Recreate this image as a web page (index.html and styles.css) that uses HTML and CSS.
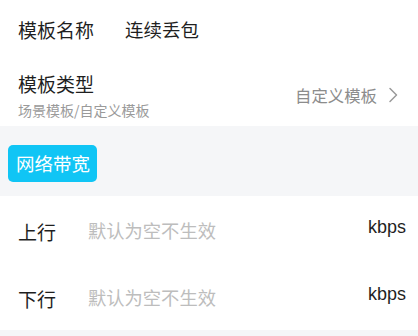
FILE: index.html
```html
<!DOCTYPE html>
<html lang="zh-CN">
<head>
<meta charset="utf-8">
<link rel="stylesheet" href="styles.css">
</head>
<body>
<div class="page">
  <section class="card">
    <div class="row row-name">
      <span class="label">模板名称</span>
      <span class="name-value">连续丢包</span>
    </div>
    <div class="row row-type">
      <div class="type-text">
        <div class="label">模板类型</div>
        <div class="sub">场景模板/自定义模板</div>
      </div>
      <div class="type-value">
        <span>自定义模板</span>
        <svg class="chev" width="10" height="16" viewBox="0 0 10 16"><path d="M2 1.5 L8.5 8 L2 14.5" fill="none" stroke="#9a9a9a" stroke-width="1.5" stroke-linecap="round" stroke-linejoin="round"/></svg>
      </div>
    </div>
  </section>
  <div class="band">
    <span class="badge">网络带宽</span>
  </div>
  <section class="card">
    <div class="row bw-row">
      <span class="bw-label">上行</span>
      <span class="placeholder">默认为空不生效</span>
      <span class="unit">kbps</span>
    </div>
    <div class="row bw-row">
      <span class="bw-label">下行</span>
      <span class="placeholder">默认为空不生效</span>
      <span class="unit">kbps</span>
    </div>
  </section>
</div>
</body>
</html>
```
FILE: styles.css
```css
html, body {
  margin: 0;
  padding: 0;
  background: #f5f6f8;
}
body {
  font-family: "Noto Sans CJK SC", "Noto Sans", sans-serif;
  color: #1f1f1f;
  width: 418px;
  height: 336px;
  overflow: hidden;
}
.page {
  display: flex;
  flex-direction: column;
}
.card {
  background: #ffffff;
  display: flex;
  flex-direction: column;
}
.row {
  display: flex;
  align-items: center;
  padding: 0 12px 0 18px;
}
.row-name {
  height: 58px;
  font-size: 19px;
}
.label {
  font-size: 19px;
  line-height: 25px;
  color: #1f1f1f;
}
.name-value {
  margin-left: 31px;
  font-size: 18.5px;
  color: #1f1f1f;
}
.row-type {
  height: 68px;
  box-sizing: border-box;
  padding-top: 13px;
  padding-bottom: 6px;
  justify-content: space-between;
}
.type-text {
  display: flex;
  flex-direction: column;
}
.sub {
  margin-top: 4px;
  font-size: 14px;
  line-height: 20px;
  color: #9a9a9a;
}
.type-value {
  display: flex;
  align-items: center;
  gap: 11px;
  font-size: 16.4px;
  color: #8c8c8c;
  margin-top: -2px;
}
.chev {
  display: block;
  margin-right: 8px;
}
.band {
  height: 70px;
  display: flex;
  align-items: center;
  padding-left: 8px;
  padding-top: 4px;
  box-sizing: border-box;
}
.badge {
  background: #10c5f5;
  color: #ffffff;
  font-size: 18.5px;
  line-height: 37px;
  padding: 0 7px 0 8px;
  border-radius: 5px;
}
.bw-row {
  height: 67px;
}
.bw-label {
  width: 70px;
  font-size: 19px;
  color: #1f1f1f;
  margin-top: 3px;
}
.placeholder {
  flex: 1;
  font-size: 18.3px;
  color: #bdbdbd;
}
.unit {
  font-family: "Liberation Sans", Arial, sans-serif;
  font-size: 18px;
  color: #1f1f1f;
  margin-top: -4px;
}
```
